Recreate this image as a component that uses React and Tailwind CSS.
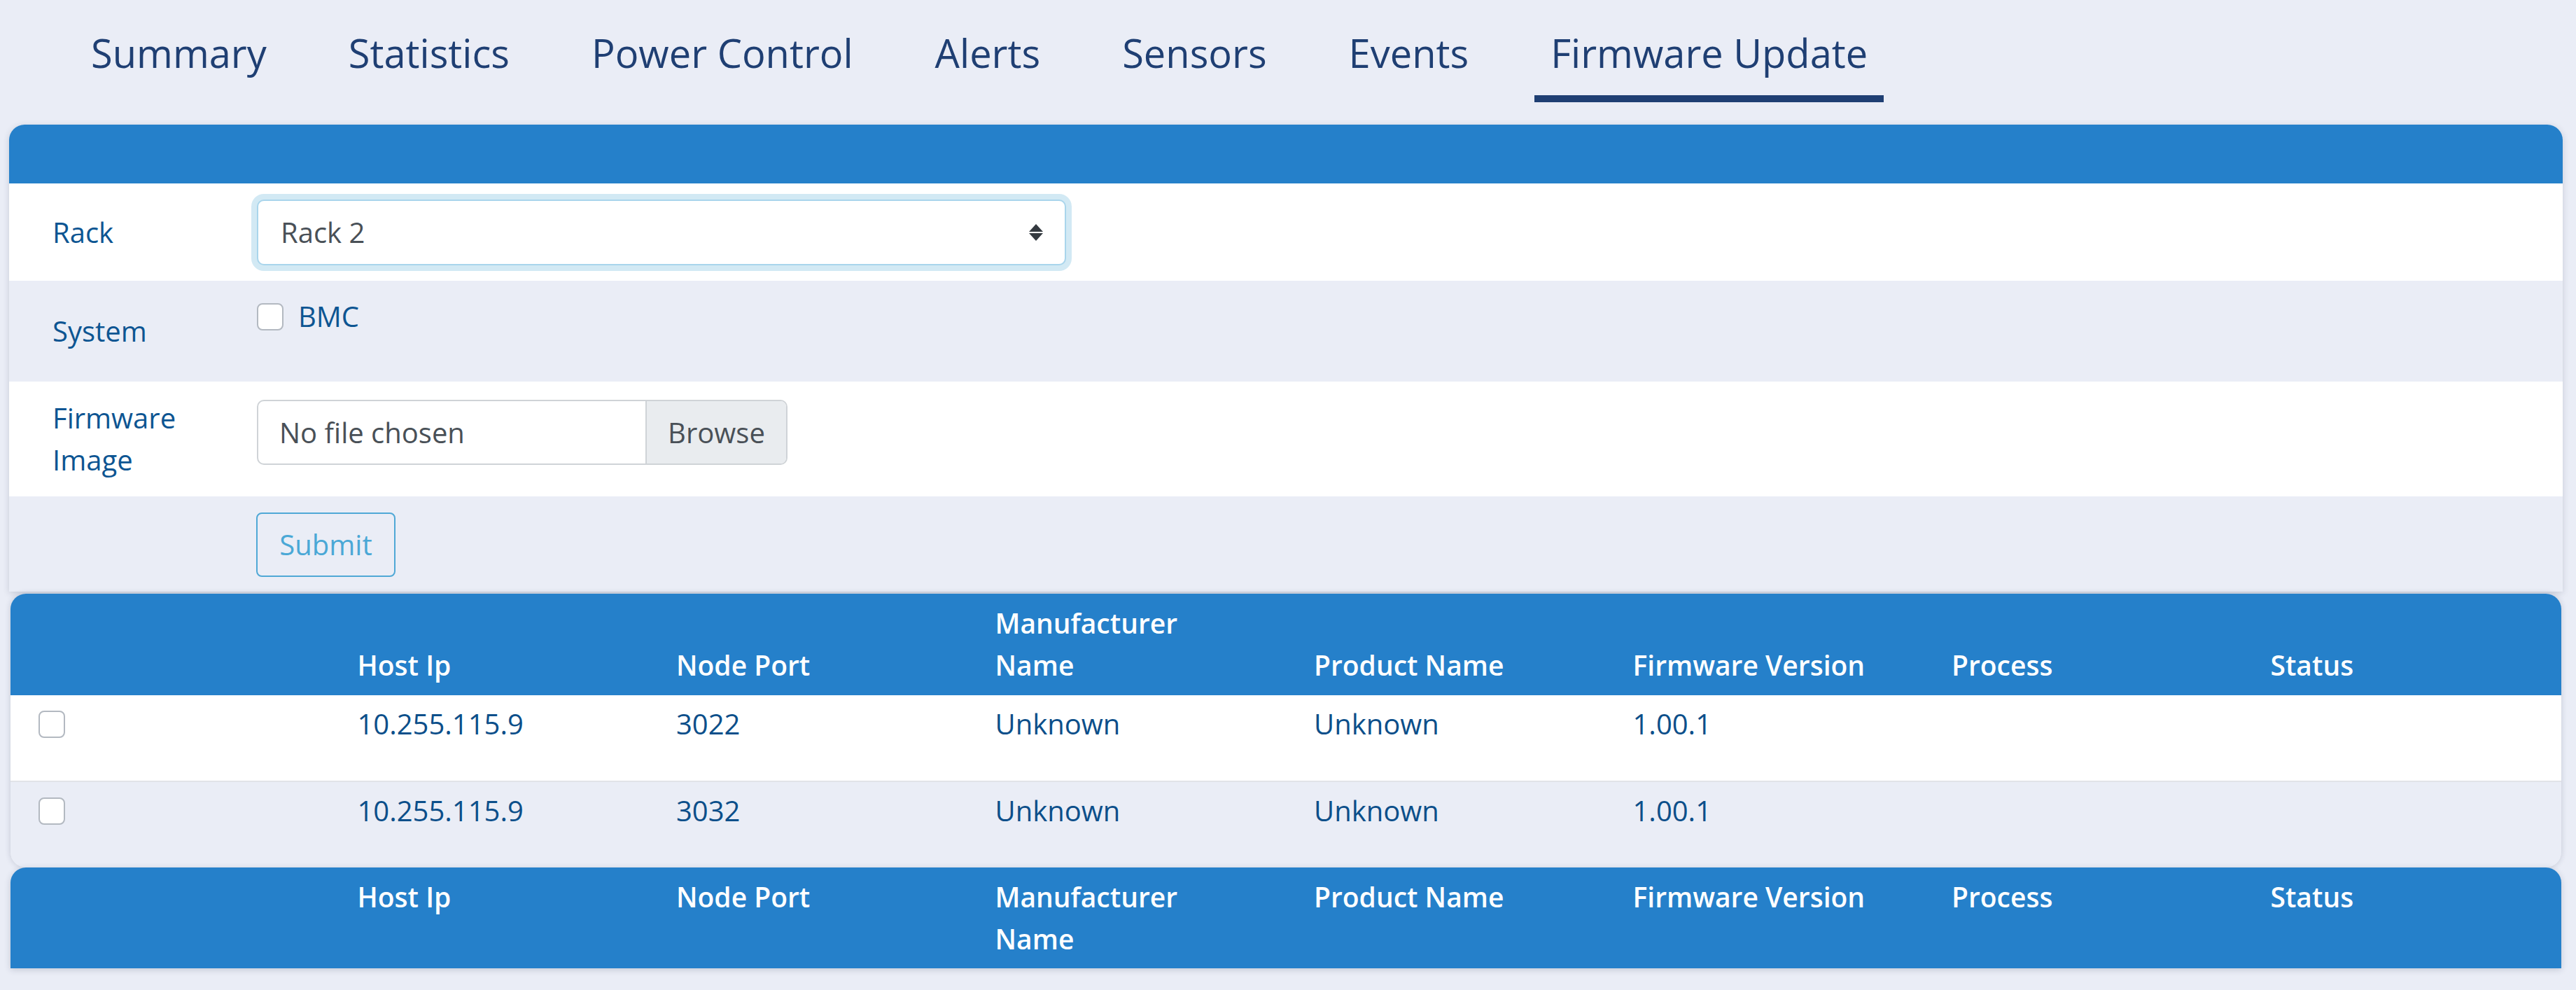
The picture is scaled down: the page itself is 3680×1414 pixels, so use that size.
import React from 'react';

const tabs = ['Summary', 'Statistics', 'Power Control', 'Alerts', 'Sensors', 'Events', 'Firmware Update'];
const columns = ['', 'Host Ip', 'Node Port', 'Manufacturer Name', 'Product Name', 'Firmware Version', 'Process', 'Status'];
const rows = [
  { ip: '10.255.115.9', port: '3022', maker: 'Unknown', product: 'Unknown', version: '1.00.1' },
  { ip: '10.255.115.9', port: '3032', maker: 'Unknown', product: 'Unknown', version: '1.00.1' },
];

function Box() {
  return <span className="block w-[38px] h-[39px] rounded-[8px] border-2 border-[#b3b9c1] bg-white" />;
}

function HeaderCells({ align }) {
  return columns.map((c, i) => (
    <th
      key={i}
      className={`pl-[40px] pr-[60px] text-left text-[39px] leading-[60px] font-semibold text-white ${align}`}
    >
      {c === 'Manufacturer Name' ? (<>Manufacturer<br />Name</>) : c}
    </th>
  ));
}

export default function App() {
  const active = 'Firmware Update';

  return (
    <div className="min-h-screen bg-[#eaedf6] font-['Open_Sans',sans-serif]">
      {/* tabs */}
      <nav className="flex gap-[71px] pl-[107px] pt-[33px] mb-[32px]">
        {tabs.map(t => (
          <div
            key={t}
            className={`px-[23px] pb-[19px] text-[56px] leading-[84px] text-[#1f3f73] border-b-[10px] ${
              t === active ? 'border-[#1f3f73]' : 'border-transparent'
            }`}
          >
            {t}
          </div>
        ))}
      </nav>

      <div className="ml-[13px] mr-[19px]">
        {/* form card */}
        <div className="rounded-t-[22px] bg-white shadow-[0_2px_10px_rgba(40,50,80,0.18)]">
          <div className="h-[84px] rounded-t-[22px] bg-[#2580ca]" />

          <div className="flex h-[139px] items-center bg-white">
            <div className="w-[354px] shrink-0 pl-[62px] text-[40px] leading-[60px] text-[#0d5592]">Rack</div>
            <div className="flex h-[94px] w-[1156px] items-center justify-between rounded-[10px] border-2 border-[#a9d5ec] bg-white pl-[32px] pr-[31px] ring-[8px] ring-[#d2e9f4]">
              <span className="text-[40px] leading-[60px] text-[#495057]">Rack 2</span>
              <svg width="20" height="24" viewBox="0 0 20 24">
                <path d="M10 0 L20 11 L0 11 Z" fill="#343a40" />
                <path d="M0 13 L20 13 L10 24 Z" fill="#343a40" />
              </svg>
            </div>
          </div>

          <div className="flex h-[144px] bg-[#eaedf6]">
            <div className="w-[354px] shrink-0 self-center pl-[62px] text-[40px] leading-[60px] text-[#0d5592]">System</div>
            <div className="flex pt-[21px]">
              <span className="mt-[11px]"><Box /></span>
              <span className="ml-[21px] text-[40px] leading-[60px] text-[#0d5592]">BMC</span>
            </div>
          </div>

          <div className="flex h-[164px] bg-white">
            <div className="w-[354px] shrink-0 self-center pl-[62px] pr-[60px] text-[40px] leading-[60px] text-[#0d5592]">Firmware Image</div>
            <div className="mt-[26px] flex h-[93px] w-[758px] overflow-hidden rounded-[10px] border-2 border-[#cfd3d7]">
              <div className="flex flex-1 items-center pl-[30px] text-[40px] leading-[60px] text-[#495057]">No file chosen</div>
              <div className="flex w-[201px] items-center justify-center border-l-2 border-[#cfd3d7] bg-[#e9ecef] text-[40px] leading-[60px] text-[#495057]">Browse</div>
            </div>
          </div>

          <div className="flex h-[136px] bg-[#eaedf6]">
            <div className="w-[353px] shrink-0" />
            <button className="mt-[23px] h-[92px] w-[199px] rounded-[8px] border-2 border-[#4fa8d6] text-[40px] leading-[60px] text-[#4aa8d6]">
              Submit
            </button>
          </div>
        </div>

        {/* node table */}
        <div className="mx-[2px] mt-[3px] overflow-hidden rounded-[22px] bg-[#eaedf6] shadow-[0_0_8px_rgba(40,50,80,0.2)]">
          <table className="w-full table-fixed border-collapse">
            <thead>
              <tr className="h-[145px] bg-[#2580ca]">
                <HeaderCells align="align-bottom pb-[13px] pt-[12px]" />
              </tr>
            </thead>
            <tbody>
              {rows.map((r, i) => (
                <tr
                  key={i}
                  className={`h-[123px] text-[40px] leading-[60px] text-[#0c4f8a] ${
                    i % 2 === 0 ? 'bg-white border-b-2 border-[#e1e3e8]' : 'bg-[#eaedf6]'
                  }`}
                >
                  <td className="pl-[40px] pt-[11px] align-top">
                    <span className="mt-[11px] block"><Box /></span>
                  </td>
                  <td className="pl-[40px] pt-[11px] align-top">{r.ip}</td>
                  <td className="pl-[40px] pt-[11px] align-top">{r.port}</td>
                  <td className="pl-[40px] pt-[11px] align-top">{r.maker}</td>
                  <td className="pl-[40px] pt-[11px] align-top">{r.product}</td>
                  <td className="pl-[40px] pt-[11px] align-top">{r.version}</td>
                  <td className="pl-[40px] pt-[11px] align-top"></td>
                  <td className="pl-[40px] pt-[11px] align-top"></td>
                </tr>
              ))}
            </tbody>
          </table>
        </div>

        {/* footer header */}
        <div className="mx-[2px] overflow-hidden rounded-t-[22px] bg-[#2580ca] shadow-[0_2px_10px_rgba(40,50,80,0.2)]">
          <table className="w-full table-fixed border-collapse">
            <tbody>
              <tr className="h-[144px]">
                <HeaderCells align="align-top pt-[12px] pb-[12px]" />
              </tr>
            </tbody>
          </table>
        </div>
      </div>
    </div>
  );
}
